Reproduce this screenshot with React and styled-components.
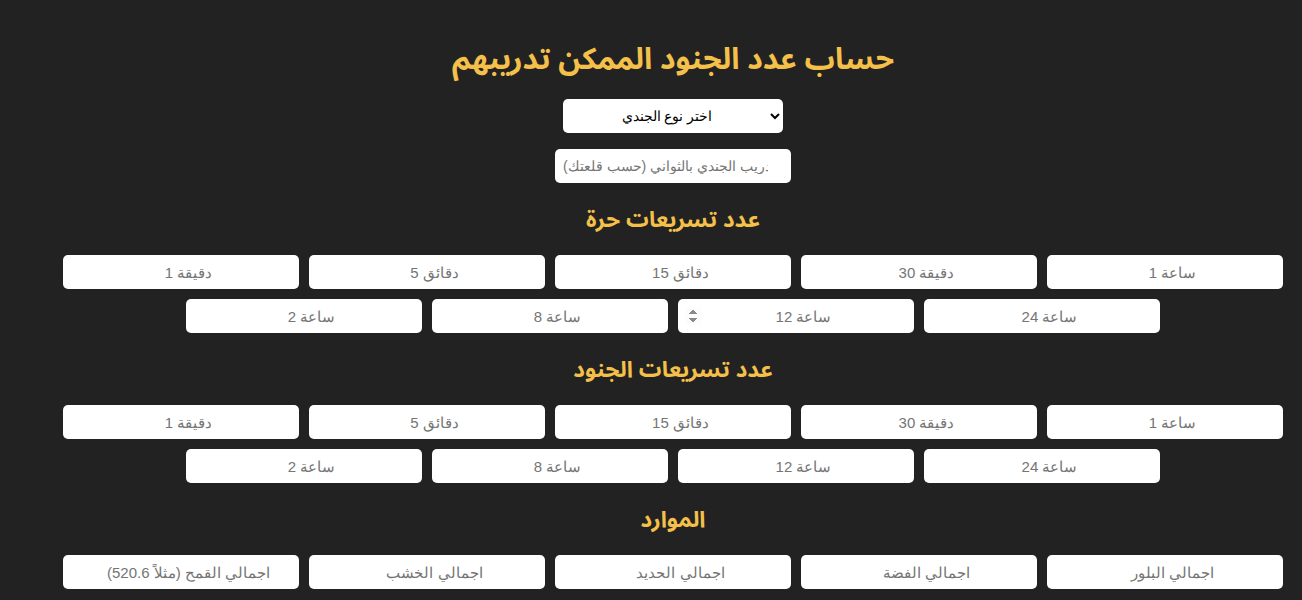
import React from "react";
import styled, { createGlobalStyle } from "styled-components";

const Global = createGlobalStyle`
  html, body { margin: 0; padding: 0; background: #222222; }
  body { font-family: "Noto Sans Arabic", "DejaVu Sans", sans-serif; }
`;

const Page = styled.div`
  direction: rtl;
  padding: 20px 0 40px 44px;
  display: flex;
  flex-direction: column;
  align-items: center;
`;

const Title = styled.h1`
  margin: 20px 0 19px;
  color: #f5c04a;
  font-family: "Noto Sans Arabic", "DejaVu Sans", sans-serif;
  font-weight: bold;
  font-size: 30px;
  line-height: 40px;
`;

const Heading = styled.h2`
  margin: 22px 0 20px;
  color: #f5c04a;
  font-family: "Noto Sans Arabic", "DejaVu Sans", sans-serif;
  font-weight: bold;
  font-size: 22.5px;
  line-height: 30px;
`;

const Select = styled.select`
  direction: ltr;
  width: 220px;
  height: 34px;
  border: none;
  border-radius: 5px;
  background: #fff;
  font-family: "Liberation Sans", Arial, sans-serif;
  font-size: 14px;
  text-align: center;
  color: #000;
  padding: 0 8px;
`;

const Field = styled.input`
  box-sizing: border-box;
  width: 236px;
  height: 34px;
  border: none;
  border-radius: 5px;
  background: #fff;
  padding: 0 8px;
  font-family: "Liberation Sans", Arial, sans-serif;
  font-size: 15px;
  text-align: center;
  color: #333;
  &::placeholder { color: #757575; }
  &::-webkit-inner-spin-button {
    opacity: ${(p) => (p.$spin ? 1 : 0)};
  }
`;

const TimeField = styled(Field)`
  direction: ltr;
  margin-top: 16px;
  font-size: 14px;
`;

const Grid = styled.div`
  display: flex;
  flex-wrap: wrap;
  justify-content: center;
  gap: 10px;
  width: 1230px;
`;

const speedups = ["ساعة 1", "دقيقة 30", "دقائق 15", "دقائق 5", "دقيقة 1", "ساعة 24", "ساعة 12", "ساعة 8", "ساعة 2"];
const resources = ["اجمالي البلور", "اجمالي الفضة", "اجمالي الحديد", "اجمالي الخشب", "اجمالي القمح (مثلاً 520.6)"];

export default function App() {
  return (
    <>
      <Global />
      <Page>
        <Title>حساب عدد الجنود الممكن تدريبهم</Title>
        <Select defaultValue="">
          <option value="">اختر نوع الجندي</option>
          <option>مشاة</option>
          <option>رماة</option>
          <option>فرسان</option>
        </Select>
        <TimeField type="number" placeholder="وقت تدريب الجندي بالثواني (حسب قلعتك)" />
        <Heading>عدد تسريعات حرة</Heading>
        <Grid>
          {speedups.map((s, i) => (
            <Field key={s} type="number" placeholder={s} $spin={i === 6} />
          ))}
        </Grid>
        <Heading>عدد تسريعات الجنود</Heading>
        <Grid>
          {speedups.map((s) => (
            <Field key={s} type="number" placeholder={s} />
          ))}
        </Grid>
        <Heading>الموارد</Heading>
        <Grid>
          {resources.map((s) => (
            <Field key={s} type="number" placeholder={s} />
          ))}
        </Grid>
      </Page>
    </>
  );
}
